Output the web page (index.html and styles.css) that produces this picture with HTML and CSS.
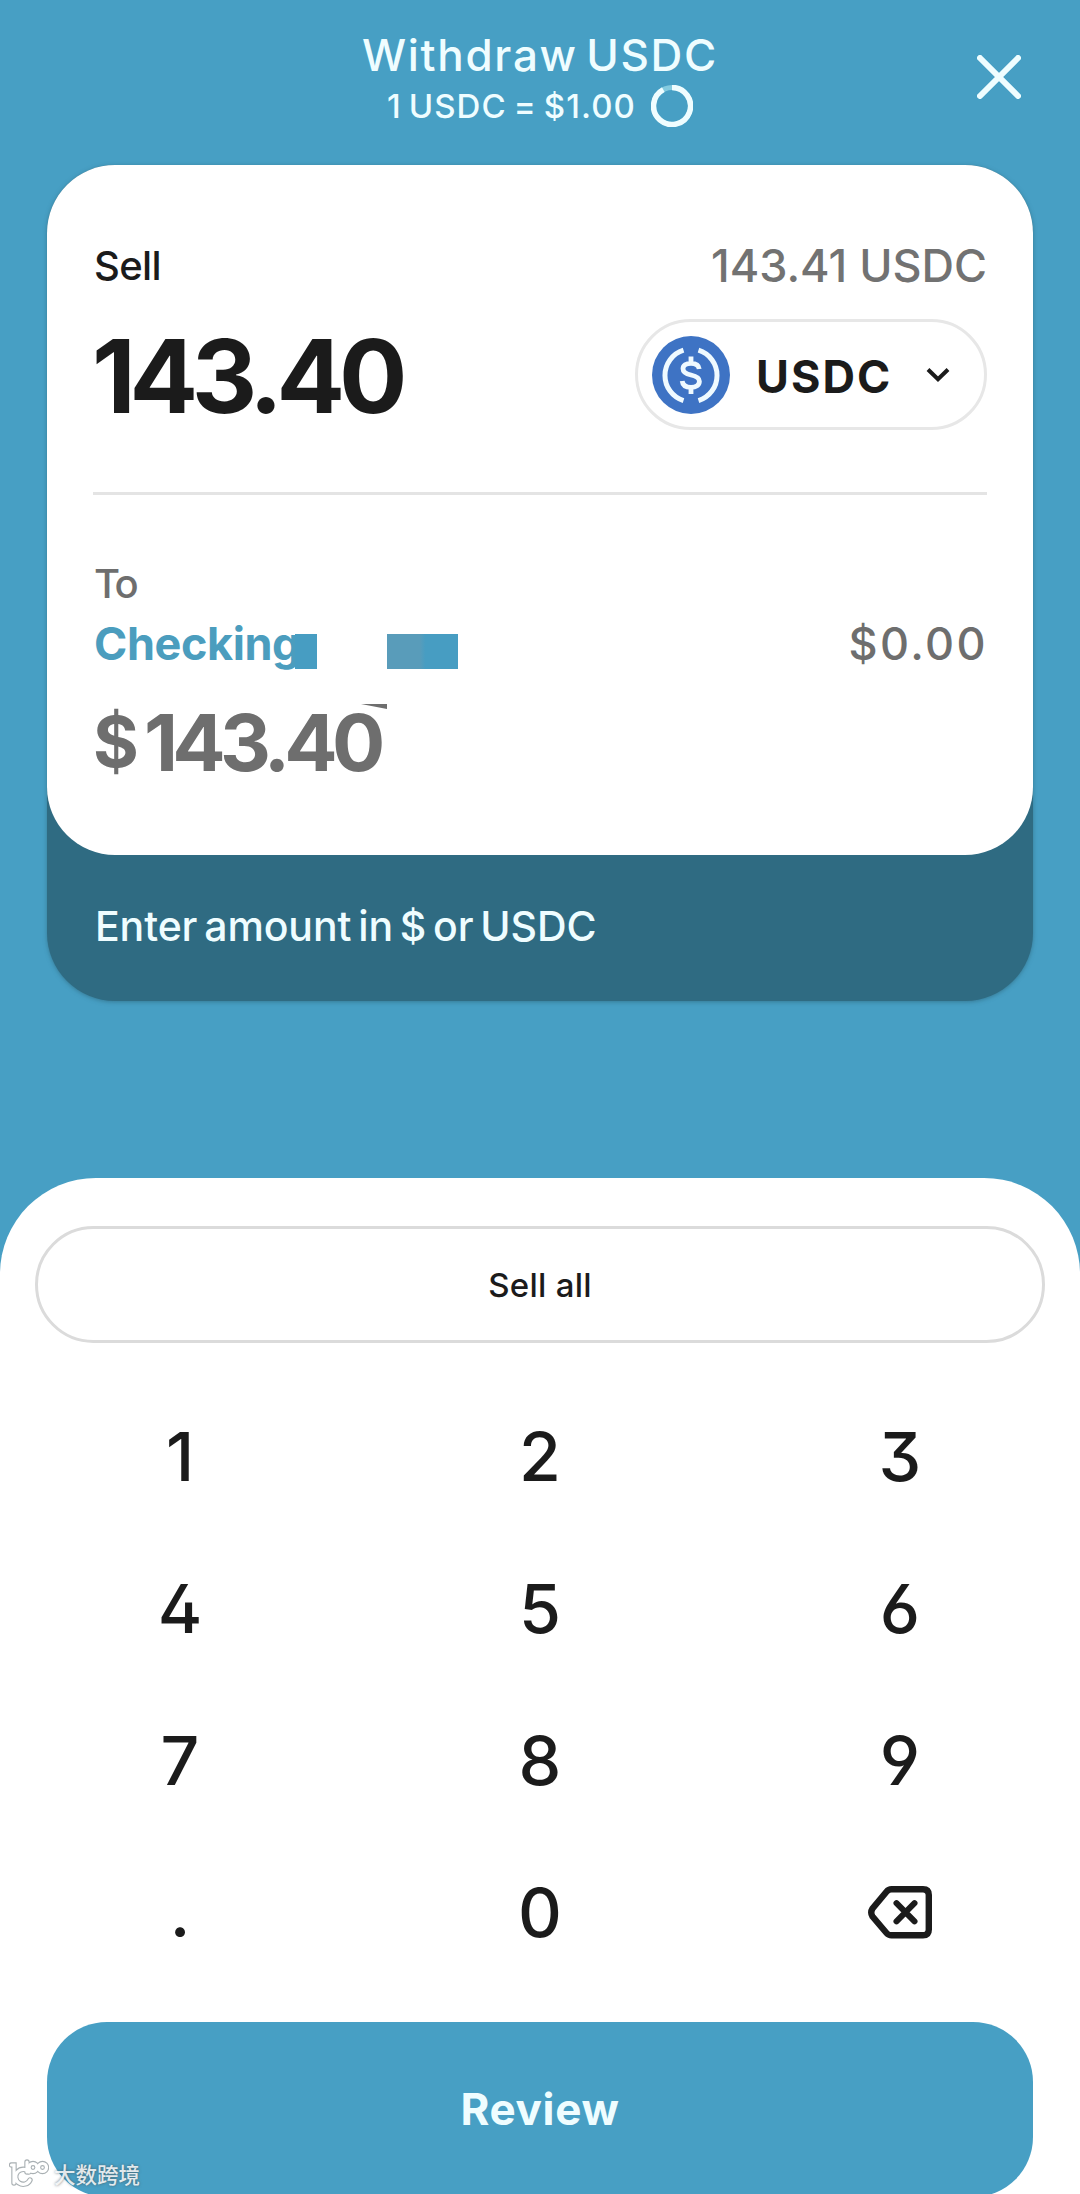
FILE: index.html
```
<!DOCTYPE html>
<html lang="en">
<head>
  <meta charset="utf-8">
  <title>Withdraw USDC</title>
  <link rel="stylesheet" href="styles.css">
</head>
<body>
  <div class="screen">
    <header class="header">
      <div class="heading">
        <h1 class="title">Withdraw USDC</h1>
        <div class="rate">
          <span>1 USDC = $1.00</span>
          <svg class="ring" viewBox="0 0 42 42" aria-hidden="true">
            <circle cx="21" cy="21" r="18.500" fill="none" stroke="#84cbe0" stroke-width="5"/>
            <path d="M21 2.500A18.500 18.500 0 1 1 12.300 4.700" fill="none" stroke="#effdff" stroke-width="5.500"/>
          </svg>
        </div>
      </div>
      <button class="close" aria-label="Close">
        <svg viewBox="0 0 44 44"><path d="M3 3L41 41M41 3L3 41" fill="none" stroke="#effdff" stroke-width="6" stroke-linecap="round"/></svg>
      </button>
    </header>

    <section class="exchange">
      <div class="card">
        <div class="row sell-row">
          <span class="label">Sell</span>
          <span class="balance">143.41 USDC</span>
        </div>
        <div class="row asset-row">
          <span class="amount">143.40</span>
          <button class="asset">
            <svg class="coin" viewBox="0 0 78 78" aria-hidden="true">
              <circle cx="39" cy="39" r="39" fill="#3e73c4"/>
              <path d="M31.500 14.200A26.400 26.400 0 0 0 31.500 64.600M46.500 14.200A26.400 26.400 0 0 1 46.500 64.600" fill="none" stroke="#effaff" stroke-width="5"/>
              <path d="M47.200 33C46.800 29.200 43.800 27.300 39 27.300C34 27.300 31 29.300 31 32.700C31 36.500 34 37.800 39 39C44.300 40.200 47.400 41.600 47.400 45.300C47.400 49.200 44 51.300 39 51.300C33.700 51.300 30.600 49 30.200 45M39 20.500V27M39 51.500V58" fill="none" stroke="#effaff" stroke-width="4.800"/>
            </svg>
            <span class="asset-name">USDC</span>
            <svg class="chevron" viewBox="0 0 24 16" aria-hidden="true"><path d="M2 2.500L12 12.300L22 2.500" fill="none" stroke="#1b1b1b" stroke-width="4"/></svg>
          </button>
        </div>
        <div class="divider"></div>
        <div class="to">To</div>
        <div class="row account-row">
          <div class="account">
            <span class="account-name">Checking</span>
            <span class="mask mask-small"></span>
            <span class="mask mask-large"></span>
          </div>
          <span class="balance dollars">$0.00</span>
        </div>
        <div class="payout">
          <span class="sign">$</span><span class="sum">143.40</span>
          <svg class="sliver" viewBox="0 0 26 5" aria-hidden="true"><path d="M0 0H26V5Z" fill="#6e6e6e"/></svg>
        </div>
      </div>
      <p class="hint">Enter amount in $ or USDC</p>
    </section>

    <section class="sheet">
      <button class="sell-all">Sell all</button>
      <div class="keypad">
        <button>1</button><button>2</button><button>3</button>
        <button>4</button><button>5</button><button>6</button>
        <button>7</button><button>8</button><button>9</button>
        <button>.</button><button>0</button>
        <button aria-label="Delete">
          <svg class="delete" viewBox="0 0 64 53"><path d="M23.500 3.200H55Q60.800 3.200 60.800 9V43.500Q60.800 49.300 55 49.300H23.500Q20.500 49.300 18.500 47L4.500 30.500Q2 26.500 4.500 22.500L18.500 5.700Q20.500 3.200 23.500 3.200Z" fill="none" stroke="#1b1b1b" stroke-width="6.400" stroke-linejoin="round"/><path d="M28.500 17.200L46.500 35.400M46.500 17.200L28.500 35.400" fill="none" stroke="#1b1b1b" stroke-width="6" stroke-linecap="round"/></svg>
        </button>
      </div>
      <button class="review">Review</button>
    </section>

    <div class="watermark">
      <svg class="watermark-logo" viewBox="0 0 40 30" aria-hidden="true">
        <g fill="none" stroke="#a9b0b3" stroke-width="5.400" stroke-linecap="round"><path d="M2.500 6H5V24M20 13A7.500 7.500 0 1 0 21 21"/><path d="M18 3V13"/><circle cx="24" cy="8.500" r="4"/><circle cx="33.500" cy="8.500" r="4"/></g>
        <g fill="none" stroke="#fff" stroke-width="3.200" stroke-linecap="round"><path d="M2.500 6H5V24M20 13A7.500 7.500 0 1 0 21 21"/><path d="M18 3V13"/><circle cx="24" cy="8.500" r="4"/><circle cx="33.500" cy="8.500" r="4"/></g>
      </svg>
      <span>大数跨境</span>
    </div>
  </div>
</body>
</html>
```
FILE: styles.css
```
* {
  box-sizing: border-box;
}

body {
  margin: 0;
  background: #479fc4;
  font-family: Inter, "Liberation Sans", sans-serif;
  font-weight: 500;
  color: #1b1b1b;
}

h1,
p {
  margin: 0;
}

button {
  padding: 0;
  border: 0;
  background: none;
  color: inherit;
  font: inherit;
}

svg {
  display: block;
  flex: none;
}

.screen {
  position: relative;
  display: flex;
  flex-direction: column;
  width: 1080px;
  height: 2194px;
  overflow: hidden;
}

.header {
  display: grid;
  flex: none;
  grid-template-columns: 1fr auto 1fr;
  height: 165px;
  padding: 31px 59px 0;
  color: #effdff;
}

.heading {
  grid-column: 2;
}

.title {
  font-size: 44px;
  font-weight: 550;
  line-height: 48px;
  letter-spacing: 1.7px;
  word-spacing: -5px;
  text-align: center;
}

.rate {
  display: flex;
  align-items: center;
  justify-content: center;
  gap: 15px;
  height: 40px;
  margin-top: 7px;
  font-size: 33px;
  line-height: 40px;
  letter-spacing: 1.1px;
  word-spacing: -3px;
}

.ring {
  width: 42px;
  height: 42px;
}

.close {
  justify-self: end;
  align-self: start;
  width: 44px;
  height: 44px;
  margin-top: 24px;
}

.exchange {
  flex: none;
  height: 836px;
  margin: 0 47px;
  border-radius: 68px;
  background: #2f6b82;
  box-shadow: 0 1px 4px rgba(47, 107, 130, 0.7);
}

.card {
  height: 690px;
  padding: 70px 46px 0;
  border-radius: 68px;
  background: #fff;
}

.row {
  display: flex;
  align-items: center;
  justify-content: space-between;
}

.sell-row {
  height: 60px;
}

.label {
  padding-left: 1px;
  font-size: 40px;
  letter-spacing: -0.64px;
}

.balance {
  color: #727272;
  font-size: 45px;
}

.dollars {
  margin-right: -1px;
  color: #6e6e6e;
  letter-spacing: 2.4px;
}

.asset-row {
  margin-top: 24px;
}

.amount {
  margin-left: -1px;
  padding-top: 3px;
  font-size: 101.5px;
  font-weight: 700;
  line-height: 108px;
  letter-spacing: -6.27px;
}

.asset {
  display: flex;
  align-items: center;
  width: 352px;
  height: 111px;
  padding-left: 14px;
  border: 3px solid #e7e7e7;
  border-radius: 56px;
}

.coin {
  width: 78px;
  height: 78px;
}

.asset-name {
  margin-left: 26px;
  padding-top: 4px;
  font-size: 45px;
  font-weight: 700;
  letter-spacing: 2px;
}

.chevron {
  width: 24px;
  height: 16px;
  margin-left: 34px;
}

.divider {
  height: 3px;
  margin-top: 62px;
  background: #e4e4e4;
}

.to {
  margin-top: 70px;
  padding-left: 1px;
  color: #6e6e6e;
  font-size: 40px;
  line-height: 38px;
  letter-spacing: -2.5px;
}

.account-row {
  height: 60px;
  margin-top: 10px;
}

.account {
  display: flex;
  align-items: center;
  padding-left: 1px;
}

.account-name {
  width: 201px;
  color: #4b9dbe;
  font-size: 45px;
  font-weight: 700;
  letter-spacing: -0.41px;
}

.mask {
  height: 35px;
  margin-top: 17px;
  background: #479dc2;
}

.mask-small {
  width: 22px;
}

.mask-large {
  width: 71px;
  margin-left: 70px;
  background: linear-gradient(90deg, #599cba 0 46%, #479dc2 54%);
}

.payout {
  position: relative;
  display: flex;
  height: 80px;
  margin-top: 29px;
  color: #6e6e6e;
  font-size: 79px;
  font-weight: 700;
  line-height: 80px;
}

.sign {
  width: 51px;
  font-size: 70px;
}

.sum {
  letter-spacing: -5.73px;
}

.sliver {
  position: absolute;
  left: 268px;
  top: 2px;
  width: 26px;
  height: 5px;
}

.hint {
  padding-left: 48px;
  color: #effdff;
  font-size: 41px;
  line-height: 142px;
  letter-spacing: -0.1px;
  word-spacing: -4px;
}

.sheet {
  display: flex;
  flex-direction: column;
  flex: none;
  height: 1040px;
  margin-top: 177px;
  padding: 48px 35px 0;
  border-radius: 96px 96px 0 0;
  background: #fff;
}

.sell-all {
  flex: none;
  height: 117px;
  border: 3px solid #dbdbdb;
  border-radius: 59px;
  font-size: 33px;
  letter-spacing: 0.26px;
}

.keypad {
  display: grid;
  grid-template-columns: repeat(3, 360px);
  grid-auto-rows: 152px;
  margin: 37px -35px 0;
  font-size: 68px;
  font-feature-settings: "ss01";
}

.keypad button {
  display: flex;
  align-items: center;
  justify-content: center;
}

.delete {
  width: 64px;
  height: 53px;
}

.review {
  flex: none;
  height: 175px;
  margin: 34px 12px 0;
  border-radius: 60px;
  background: #479fc4;
  color: #effdff;
  font-size: 44px;
  font-weight: 700;
  letter-spacing: 0.66px;
  line-height: 175px;
}

.watermark {
  position: absolute;
  left: 9px;
  top: 2158px;
  display: flex;
  align-items: center;
  gap: 5px;
  color: rgba(255, 255, 255, 0.85);
  font-family: "Noto Sans CJK SC", sans-serif;
  font-size: 21.5px;
  line-height: 32px;
  text-shadow: 0 0 3px rgba(70, 80, 85, 0.8);
}

.watermark-logo {
  width: 40px;
  height: 30px;
}
```
